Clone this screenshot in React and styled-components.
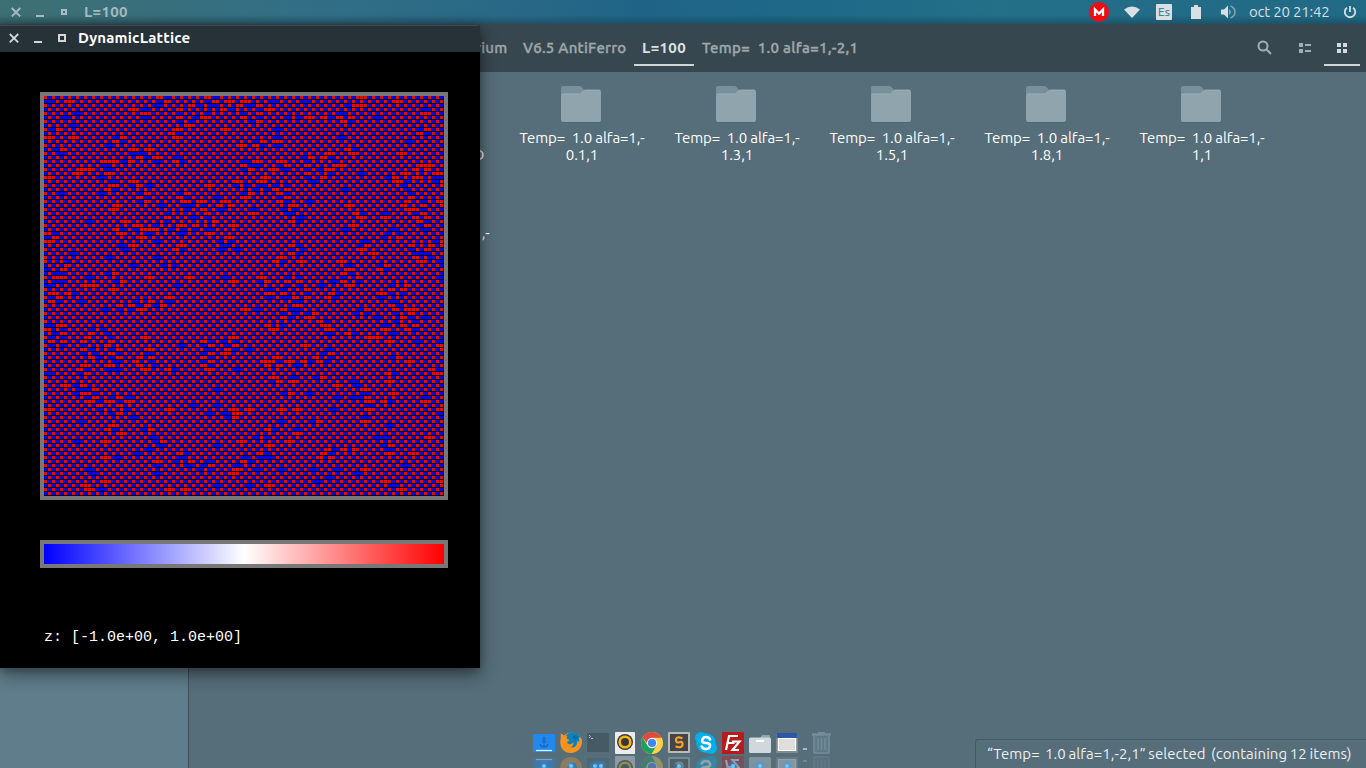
import React from "react";
import styled, { createGlobalStyle } from "styled-components";

const Global = createGlobalStyle`
  body { margin: 0; background: #566e7a; overflow: hidden; }
  * { box-sizing: border-box; }
`;

const Desktop = styled.div`
  position: relative;
  width: 1366px;
  height: 768px;
  overflow: hidden;
  display: flex;
  flex-direction: column;
  font-family: Ubuntu, "Noto Sans", sans-serif;
  font-size: 15px;
  color: #fff;
`;

const Panel = styled.header`
  height: 24px;
  flex: none;
  display: flex;
  align-items: center;
  justify-content: space-between;
  padding: 0 9px 0 11px;
  color: #d9dfe2;
  background:
    linear-gradient(to bottom, transparent 15px, rgba(15, 40, 50, 0.35) 24px),
    linear-gradient(to right, #3d7073 0, #396f7a 130px, #326f86 300px, #2a6986 500px, #1f6487 640px, #1f6a88 850px, #237088 1000px, #236d88 1100px, #206a86 1366px);
`;

const PanelGroup = styled.div`
  display: flex;
  align-items: center;
  height: 24px;
`;

const Title = styled.span`
  font-weight: 700;
  line-height: 24px;
  white-space: pre;
  color: ${(p) => p.$color};
  letter-spacing: ${(p) => p.$track || 0}px;
  margin-left: ${(p) => p.$gap}px;
`;

const Buttons = styled.svg`
  display: block;
  flex: none;
`;

const Glyph = styled.svg`
  display: block;
  flex: none;
  margin-right: ${(p) => p.$gap || 0}px;
`;

const Clock = styled.span`
  line-height: 24px;
  letter-spacing: -0.2px;
  width: 80px;
  margin-right: 14px;
  white-space: pre;
`;

const Layout = styled.span`
  width: 16px;
  height: 16px;
  margin-right: 19px;
  border-radius: 1px;
  background: #d9dfe2;
  color: #2b7089;
  font-size: 12px;
  line-height: 16px;
  text-align: center;
`;

const Toolbar = styled.nav`
  height: 48px;
  flex: none;
  display: flex;
  justify-content: space-between;
  padding: 0 6px 0 472px;
  background: #37474f;
`;

const Tabs = styled.div`
  display: flex;
  height: 42px;
`;

const Tab = styled.div`
  width: ${(p) => p.$w}px;
  height: 42px;
  padding-left: ${(p) => p.$pad ?? 8}px;
  line-height: 48px;
  font-weight: ${(p) => (p.$on ? 700 : 500)};
  color: ${(p) => (p.$on ? "#dde1e3" : "#9fa7ab")};
  -webkit-text-stroke: ${(p) => (p.$on ? 0 : 0.35)}px currentColor;
  box-shadow: ${(p) => (p.$on ? "inset 0 -2px #cfd4d6" : "none")};
  letter-spacing: ${(p) => p.$track || 0}px;
  white-space: pre;
`;

const Tools = styled.div`
  display: flex;
  height: 42px;
`;

const Tool = styled.div`
  width: ${(p) => p.$w}px;
  height: 42px;
  padding-top: 16px;
  display: flex;
  justify-content: center;
  box-shadow: ${(p) => (p.$on ? "inset 0 -2px #cfd4d6" : "none")};
`;

const Body = styled.div`
  flex: 1;
  display: flex;
  min-height: 0;
`;

const Sidebar = styled.aside`
  width: 189px;
  background: #607d8b;
  border-right: 1px solid #3f4f57;
`;

const Content = styled.main`
  flex: 1;
  display: grid;
  grid-template-columns: repeat(7, 155px);
  grid-auto-rows: 95px;
  padding: 13px 0 0 4.5px;
  background: #566e7a;
`;

const Item = styled.div`
  display: flex;
  flex-direction: column;
  align-items: center;
`;

const Label = styled.div`
  margin-top: 6px;
  padding-left: 2px;
  line-height: 17px;
  text-align: center;
  white-space: pre;
  letter-spacing: ${(p) => p.$track ?? -0.1}px;
`;

const Sim = styled.section`
  position: absolute;
  left: 0;
  top: 25px;
  width: 480px;
  height: 643px;
  background: #000;
  border-radius: 0 3px 0 0;
  box-shadow: 0 7px 18px rgba(0, 0, 0, 0.4), 0 2px 8px rgba(0, 0, 0, 0.25);
`;

const SimBar = styled.div`
  height: 27px;
  display: flex;
  align-items: center;
  padding: 0 0 2px 9px;
  background: #263238;
  border-top: 1px solid #3d484d;
  border-radius: 0 3px 0 0;
`;

const Frame = styled.div`
  width: 408px;
  height: ${(p) => p.$h}px;
  margin: 40px 0 0 40px;
  border: 4px solid #787878;
`;

const Scale = styled.div`
  height: 20px;
  background: linear-gradient(to right, #00f, #fff 50%, #f00);
`;

const Range = styled.div`
  margin: 61px 0 0 44px;
  font: 15px/18px "Liberation Mono", monospace;
  white-space: pre;
`;

const Status = styled.div`
  position: absolute;
  right: 0;
  bottom: 0;
  width: 391px;
  height: 29px;
  padding-left: 11px;
  line-height: 28px;
  background: #566e7a;
  border: 1px solid #445963;
  border-right: 0;
  border-bottom: 0;
  border-radius: 3px 0 0 0;
  color: #eceff1;
  white-space: pre;
  letter-spacing: 0.05px;
  word-spacing: -0.8px;
`;

const Dock = styled.div`
  position: absolute;
  left: 533px;
  top: 732px;
  height: 36px;
  display: flex;
  gap: 5px;
  overflow: hidden;
`;

const Launcher = styled.div`
  position: relative;
  width: ${(p) => p.$w || 22}px;
  display: flex;
  flex-direction: column;
  gap: 2px;
  margin-left: ${(p) => p.$shift || 0}px;
  svg { display: block; flex: none; }
`;

const Mirror = styled.div`
  transform: scaleY(-1);
  opacity: 0.36;
`;

const Glow = styled.i`
  position: absolute;
  left: ${(p) => p.$x}px;
  top: 32px;
  width: 4px;
  height: 4px;
  border-radius: 50%;
  background: #6cc4ff;
  box-shadow: 0 0 4px 2px rgba(50, 150, 240, 0.6);
`;

function WindowButtons({ color, small }) {
  return (
    <Buttons width="60" height="14" viewBox="0 0 60 14" fill="none" stroke={color} strokeWidth="2">
      <path d="M0.8 3l8.4 8.4M9.2 3L0.8 11.4" strokeWidth="1.8" />
      <path d="M25 11h8" />
      {small ? <path d="M51 5h4v4h-4z" /> : <path d="M50 4h6v6h-6z" />}
    </Buttons>
  );
}

const N = 100;

// Antiferromagnetic Ising lattice relaxed with Metropolis sweeps from the
// ordered checkerboard; returns one path for each spin direction.
function buildLattice() {
  let seed = 20211;
  const rnd = () => {
    seed = (seed + 0x6d2b79f5) | 0;
    let t = Math.imul(seed ^ (seed >>> 15), 1 | seed);
    t = (t + Math.imul(t ^ (t >>> 7), 61 | t)) ^ t;
    return ((t ^ (t >>> 14)) >>> 0) / 4294967296;
  };
  const s = Array.from({ length: N * N }, (_, k) => (((k % N) + Math.floor(k / N)) % 2 ? -1 : 1));
  for (let step = 0; step < 40 * N * N; step++) {
    const x = Math.floor(rnd() * N);
    const y = Math.floor(rnd() * N);
    const k = y * N + x;
    const sum =
      s[y * N + ((x + 1) % N)] + s[y * N + ((x + N - 1) % N)] +
      s[((y + 1) % N) * N + x] + s[((y + N - 1) % N) * N + x];
    const dE = -2 * s[k] * sum;
    if (dE <= 0 || rnd() < Math.exp(-dE / 2.2)) s[k] = -s[k];
  }
  let up = "";
  let down = "";
  s.forEach((v, k) => {
    const cell = `M${(k % N) * 4} ${Math.floor(k / N) * 4}h3v3h-3z`;
    if (v > 0) up += cell;
    else down += cell;
  });
  return { up, down };
}

const lattice = buildLattice();

const LatticeView = styled.svg`
  display: block;
`;

function Lattice() {
  return (
    <LatticeView width="400" height="400" shapeRendering="crispEdges">
      <path d={lattice.up} fill="#f00" />
      <path d={lattice.down} fill="#00f" />
    </LatticeView>
  );
}

function Folder() {
  return (
    <svg width="40" height="38" viewBox="0 0 40 38">
      <path d="M0 12V3q0-2 2-2h16.500q1 0 2 1l3.500 4v6z" fill="#78909c" />
      <path d="M2 37.500h36q2 0 2-2v-1H0v1q0 2 2 2z" fill="#4b626d" />
      <path d="M0 11q0-2 2-2h16q1.500 0 2.500-1l2-2q1-1 2.500-1h13q2 0 2 2v28q0 2-2 2H2q-2 0-2-2z" fill="#90a4ae" />
      <path d="M.5 10q.5-1 1.500-1h16q1.500 0 2.500-1l2-2q1-1 2.500-1h13q1 0 1.500 1" fill="none" stroke="#a3b3bb" strokeWidth=".8" />
    </svg>
  );
}

const icons = {
  anchor: (
    <>
      <rect y="2" width="22" height="18" rx="1" fill="#2188ee" />
      <path d="M3 18.500h16" stroke="#e8f2fc" strokeWidth="1.300" />
      <g fill="none" stroke="#1768bd" strokeWidth="1.100">
        <circle cx="11" cy="6.500" r="1.200" />
        <path d="M11 8v7M8.500 9.500h5M7 12q1 3 4 3t4-3" />
      </g>
    </>
  ),
  firefox: (
    <>
      <path d="M.8 1.200L4 3.500Q7 .5 12 .5q8 0 10 8 .5 5-2.500 8.500Q16 21 11 21 5 21 2 16.500-.8 12 .8 6z" fill="#f7931e" />
      <path d="M5.500 3.500Q9 .2 13 .3q6 .5 8 5.700l-2-.8.300 5-2-1.700q0 4.500-2.500 6.500l-4.300.8q3.500-2.800 3-5l-3.500 1.700-2.500-1-.5-1.500 2.500-1.700-3-2 .8-2.500z" fill="#0b82bb" />
      <path d="M14 3q3 0 4 3l-3 3q0-3-3-3z" fill="#0a6ea6" />
    </>
  ),
  terminal: (
    <>
      <rect y="1" width="22" height="19" rx="1" fill="#455a64" />
      <path d="M2 3l1.500 1.500L2 6M4 6.500h2" fill="none" stroke="#cfd8dc" strokeWidth=".8" />
    </>
  ),
  speaker: (
    <>
      <rect x="1" width="20" height="22" rx="1" fill="#ececec" />
      <circle cx="11" cy="10" r="8" fill="#3b3b3d" />
      <circle cx="11" cy="10" r="5.300" fill="none" stroke="#f6b90f" strokeWidth="2.600" />
      <circle cx="11" cy="10" r="2.600" fill="#37373c" />
    </>
  ),
  chrome: (
    <>
      <circle cx="11" cy="11" r="11" fill="#fdd04d" />
      <path d="M1.500 5.500A11 11 0 0 0 10.500 22L15.500 13.500 11 11 6.300 13.500z" fill="#1aa15f" />
      <path d="M1.500 5.500A11 11 0 0 1 20.600 5.700H11L6 11z" fill="#dd4b3e" />
      <circle cx="11" cy="11" r="5.200" fill="#f4f4f4" />
      <circle cx="11" cy="11" r="4.100" fill="#4285f4" />
    </>
  ),
  sublime: (
    <>
      <rect width="22" height="21" rx="1" fill="#b9b9b9" />
      <rect x="2" y="2" width="18" height="17" fill="#454545" />
      <path d="M14.500 6.300Q8 4 8 7.700t3.500 2.500T14.500 13q-.5 3.500-7 1.500" fill="none" stroke="#f9a32b" strokeWidth="2.200" />
    </>
  ),
  skype: (
    <>
      <circle cx="11" cy="11" r="9.800" fill="#00aff0" />
      <circle cx="6" cy="6" r="6" fill="#00aff0" />
      <circle cx="16" cy="16" r="6" fill="#00aff0" />
      <path d="M15 7.500Q14 5 11 5T7.200 8 11 11t4 3-4 3-4.300-2.500" fill="none" stroke="#fff" strokeWidth="2.600" strokeLinecap="round" />
    </>
  ),
  filezilla: (
    <>
      <rect width="22" height="22" rx="1" fill="#b81b1e" />
      <path d="M4 18L7 4h9M5.500 11h7M10 9.500h7.500L10.500 18H17" fill="none" stroke="#fff" strokeWidth="2.200" />
    </>
  ),
  files: (
    <>
      <path d="M11 6l2-3h7q1 0 1 1v4H11z" fill="#90a4ae" />
      <path d="M0 7q0-1.500 1.500-1.500h19Q22 5.500 22 7v12.500Q22 21 20.500 21h-19Q0 21 0 19.500z" fill="#cfd8dc" />
      <path d="M7 9h8" stroke="#fff" strokeWidth="2" />
    </>
  ),
  window: (
    <>
      <rect y="1" width="22" height="20" rx="1" fill="#808b91" />
      <rect x=".5" y="1" width="21" height="5" fill="#2e57a5" />
      <rect x="1.800" y="6" width="18.400" height="13" fill="#fff" />
      <rect x="3" y="7" width="16" height="11" fill="#dedfd9" />
    </>
  ),
  dash: <path d="M1 17h4" stroke="#e4e8ea" strokeWidth="1.200" />,
  trash: (
    <>
      <path d="M2 3h17v17.500q0 1.500-1.500 1.500h-14Q2 22 2 20.500z" fill="#607b87" />
      <g fill="none" stroke="#728d99">
        <path d="M1 2.500h19" strokeWidth="2.500" />
        <path d="M7 1h7" strokeWidth="2" />
        <path d="M3 4v16q0 1 1 1h13q1 0 1-1V4" strokeWidth="1.600" />
        <path d="M7 6v12M10.500 6v12M14 6v12" strokeWidth="1.500" />
      </g>
    </>
  ),
};

const launchers = [
  { id: "anchor", dots: [9] },
  { id: "firefox", dots: [9] },
  { id: "terminal", dots: [6, 12] },
  { id: "speaker", dots: [] },
  { id: "chrome", dots: [] },
  { id: "sublime", dots: [9] },
  { id: "skype", dots: [] },
  { id: "filezilla", dots: [9] },
  { id: "files", dots: [9] },
  { id: "window", dots: [9] },
  { id: "dash", dots: [], w: 6, shift: -1 },
  { id: "trash", dots: [], shift: -2 },
];

const entries = [
  null,
  ["Temp=  1.0", "1,1 AUTOMATED"],
  ["Temp=  1.0 alfa=1,-", "0.1,1"],
  ["Temp=  1.0 alfa=1,-", "1.3,1"],
  ["Temp=  1.0 alfa=1,-", "1.5,1"],
  ["Temp=  1.0 alfa=1,-", "1.8,1"],
  ["Temp=  1.0 alfa=1,-", "1,1"],
  null,
  ["Temp=  1.0 alfa=1,-", "2,1 simulacion 0"],
];

export default function App() {
  return (
    <Desktop>
      <Global />
      <Panel>
        <PanelGroup>
          <WindowButtons color="#a9bdc3" small />
          <Title $color="#a5bac1" $gap={13} $track={0.35}>L=100</Title>
        </PanelGroup>
        <PanelGroup>
          <Glyph width="20" height="20" $gap={15}>
            <circle cx="10" cy="10" r="10" fill="#f00c14" />
            <path d="M6 14V7.500l4 4 4-4V14" fill="none" stroke="#fff" strokeWidth="2.300" />
          </Glyph>
          <Glyph width="16" height="12" $gap={16}>
            <path d="M0 3.500Q8-2.500 16 3.500L8 12z" fill="#d9dfe2" />
          </Glyph>
          <Layout>Es</Layout>
          <Glyph width="10" height="14" $gap={20}>
            <path d="M0 2h3V0h4v2h3v12H0z" fill="#d9dfe2" />
          </Glyph>
          <Glyph width="15" height="14" $gap={13}>
            <path d="M0 4.500h3L7 .5v13L3 9.500H0z" fill="#d9dfe2" />
            <path d="M8.500 4q2 3 0 6z" fill="#d9dfe2" />
            <path d="M9.500 1Q14 3 14 7t-4.500 6" fill="none" stroke="#7ea4b3" strokeWidth="1.500" />
          </Glyph>
          <Clock>oct 20 21:42</Clock>
          <Glyph width="14" height="14" fill="none" stroke="#d9dfe2" strokeWidth="1.800">
            <path d="M7 1v6M4 2.800a5.200 5.200 0 1 0 6 0" />
          </Glyph>
        </PanelGroup>
      </Panel>
      <Toolbar>
        <Tabs>
          <Tab $w={43} $pad={3} $track={0.25}>rium</Tab>
          <Tab $w={119} $track={0.25}>V6.5 AntiFerro</Tab>
          <Tab $w={60} $on $track={0.4}>L=100</Tab>
          <Tab $w={180} $track={0.32}>Temp=  1.0 alfa=1,-2,1</Tab>
        </Tabs>
        <Tools>
          <Tool $w={44}>
            <svg width="15" height="15" fill="none" stroke="#a5adb1" strokeWidth="2">
              <circle cx="6" cy="6" r="4.500" />
              <path d="M9.300 9.300l4.700 4.700" />
            </svg>
          </Tool>
          <Tool $w={38}>
            <svg width="12" height="16" fill="#a5adb1">
              <path d="M0 3h4v4H0zM6 4h6v2H6zM0 9h4v4H0zM6 10h6v2H6z" />
            </svg>
          </Tool>
          <Tool $w={36} $on>
            <svg width="10" height="16" fill="#d5d9db">
              <path d="M0 3h4v4H0zM6 3h4v4H6zM0 9h4v4H0zM6 9h4v4H6z" />
            </svg>
          </Tool>
        </Tools>
      </Toolbar>
      <Body>
        <Sidebar />
        <Content>
          {entries.map((lines, i) => (
            <Item key={i}>
              {lines && <Folder />}
              {lines && <Label $track={i === 1 ? 0.15 : undefined}>{lines.join("\n")}</Label>}
            </Item>
          ))}
        </Content>
      </Body>
      <Sim>
        <SimBar>
          <WindowButtons color="#d3d6d7" />
          <Title $color="#fff" $gap={9} $track={0.2}>DynamicLattice</Title>
        </SimBar>
        <Frame $h={408}>
          <Lattice />
        </Frame>
        <Frame $h={28}>
          <Scale />
        </Frame>
        <Range>z: [-1.0e+00, 1.0e+00]</Range>
      </Sim>
      <Dock>
        {launchers.map(({ id, dots, w, shift }) => (
          <Launcher key={id} $w={w} $shift={shift}>
            <svg width={w || 22} height="22">{icons[id]}</svg>
            <Mirror>
              <svg width={w || 22} height="22">{icons[id]}</svg>
            </Mirror>
            {dots.map((x) => (
              <Glow key={x} $x={x} />
            ))}
          </Launcher>
        ))}
      </Dock>
      <Status>“Temp=  1.0 alfa=1,-2,1” selected  (containing 12 items)</Status>
    </Desktop>
  );
}
